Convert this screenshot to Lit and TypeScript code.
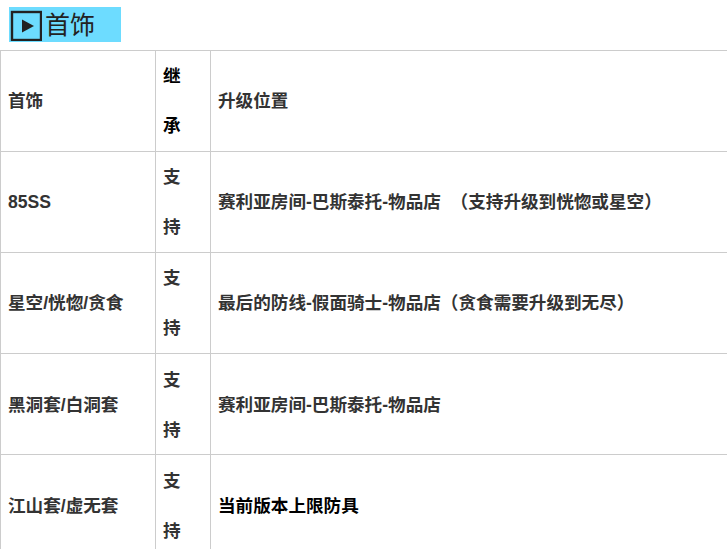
import { LitElement, html, css } from "lit";
import { customElement } from "lit/decorators.js";

const rows: [string, string, string, boolean?][] = [
  ["首饰", "继承", "升级位置"],
  ["85SS", "支持", "赛利亚房间-巴斯泰托-物品店  （支持升级到恍惚或星空）"],
  ["星空/恍惚/贪食", "支持", "最后的防线-假面骑士-物品店（贪食需要升级到无尽）"],
  ["黑洞套/白洞套", "支持", "赛利亚房间-巴斯泰托-物品店"],
  ["江山套/虚无套", "支持", "当前版本上限防具", true],
];

@customElement("app-root")
export class AppRoot extends LitElement {
  static styles = css`
    :host { display: block; font-family: "Liberation Sans", "Noto Sans CJK SC", sans-serif; background: #fff; height: 549px; overflow: hidden; }
    .head { padding: 7px 0 8px 9px; }
    .title { display: flex; align-items: center; width: 112px; height: 35px; background: #6ddcff; font-family: "Noto Sans CJK SC", sans-serif; font-weight: 400; font-size: 25px; line-height: 33px; color: #222; }
    .title span { padding-bottom: 2px; }
    .icon { width: 32px; height: 32px; flex: none; margin: 0 3px 0 1px; }
    .grid { display: grid; grid-template-columns: 155px 55px 600px; width: 812px; border-top: 1px solid #ccc; border-left: 1px solid #ccc; }
    .cell { box-sizing: border-box; height: 101px; border-right: 1px solid #ccc; border-bottom: 1px solid #ccc; display: flex; align-items: center; padding-left: 7px; font-size: 17.6px; line-height: 24px; font-weight: 700; color: #333; white-space: pre; }
    .cell.low { padding-top: 2px; }
    .mid { flex-direction: column; align-items: flex-start; justify-content: center; line-height: 50.5px; }
    .black { color: #000; }
  `;
  render() {
    return html`
      <div class="head"><div class="title">
        <svg class="icon" viewBox="0 0 32 32"><rect x="2" y="3" width="29" height="28" fill="none" stroke="#222" stroke-width="2.4"/><path d="M12 10.5 L24 17 L12 23.5 Z" fill="#222"/></svg>
        <span>首饰</span>
      </div></div>
      <div class="grid">
        ${rows.map((r, i) => {
          const low = i >= 3 ? "low" : "";
          return html`
          <div class="cell ${low}">${r[0]}</div>
          <div class="cell mid ${low} ${i === 0 ? "black" : ""}"><span>${r[1][0]}</span><span>${r[1][1]}</span></div>
          <div class="cell ${low} ${r[3] ? "black" : ""}">${r[2]}</div>
        `;
        })}
      </div>`;
  }
}
